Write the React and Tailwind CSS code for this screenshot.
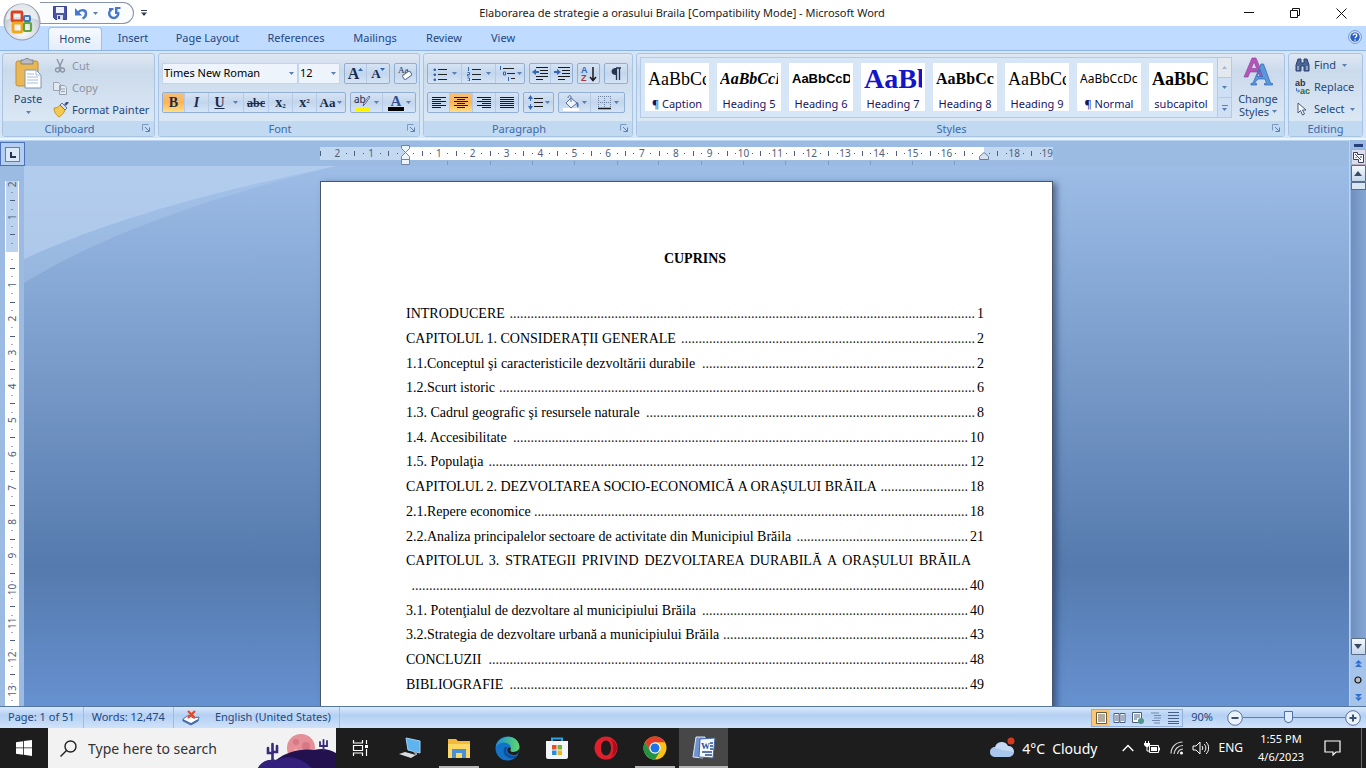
import React from "react";

const Caret = ({ className = "" }) => (
  <svg viewBox="0 0 5 3" className={`h-[3px] w-[5px] shrink-0 ${className}`} aria-hidden="true">
    <path d="M0 0h5L2.500 3z" fill="#5b7fb0" />
  </svg>
);

const Svg = ({ w = 16, h = 16, children, className = "" }) => (
  <svg width={w} height={h} viewBox={`0 0 ${w} ${h}`} className={`shrink-0 ${className}`} fill="none" aria-hidden="true">
    {children}
  </svg>
);

/* ---------- Title bar ---------- */

const OfficeOrb = () => (
  <button aria-label="Office Button" className="absolute left-[3px] top-[3px] z-10 h-[38px] w-[38px]">
    <svg viewBox="0 0 38 38" className="h-[38px] w-[38px]">
      <defs>
        <radialGradient id="orb" cx="0.5" cy="0.75" r="0.75">
          <stop offset="0" stopColor="#ffffff" />
          <stop offset="0.55" stopColor="#d5dae2" />
          <stop offset="1" stopColor="#aab3c1" />
        </radialGradient>
      </defs>
      <circle cx="19" cy="19" r="18" fill="url(#orb)" stroke="#8b98ad" />
      <path d="M3 17a16 16 0 0 1 32 0c-9-4-23-4-32 0z" fill="#fff" opacity=".65" />
      <rect x="9" y="9" width="10" height="9" rx="1" stroke="#d9421c" strokeWidth="2.800" fill="none" />
      <rect x="21" y="13" width="6" height="5" rx="1" stroke="#3b78c4" strokeWidth="2" fill="none" />
      <rect x="10" y="20" width="9" height="9" rx="1" stroke="#f0a81c" strokeWidth="2.800" fill="none" />
      <rect x="21" y="20" width="7" height="8" rx="1" stroke="#5fa640" strokeWidth="2.200" fill="none" />
    </svg>
  </button>
);

const TitleBar = () => (
  <header className="flex h-[26px] items-center bg-white">
    <div className="flex flex-1 items-center">
      <OfficeOrb />
      <div className="ml-[40px] flex h-[22px] w-[94px] items-center rounded-r-full border border-l-0 border-[#8793a8] bg-[#fbfcfe] pl-[13px]">
        <button aria-label="Save">
          <Svg w={14} h={14}>
            <path d="M.5.5h13v13h-11l-2-2z" fill="#4a55a8" stroke="#37418c" />
            <path d="M3 1h8v6H3z" fill="#eef2fb" />
            <path d="M4 9h6v5H4z" fill="#d9dff0" />
            <path d="M5 10h2v3H5z" fill="#37418c" />
          </Svg>
        </button>
        <button aria-label="Undo" className="ml-[8px]">
          <Svg w={13} h={13}>
            <path d="M3 5.500C6 2 11 2.500 11 6.500c0 2-1 4-3.500 5" stroke="#4478ca" strokeWidth="2.400" />
            <path d="M0 1v7.500h7z" fill="#4478ca" />
          </Svg>
        </button>
        <Caret className="ml-[5px]" />
        <button aria-label="Repeat" className="ml-[10px]">
          <Svg w={13} h={13}>
            <path d="M3.500 2.500A4.500 4.500 0 1 0 10 5" stroke="#4478ca" strokeWidth="2.400" />
            <path d="M1 1h4.500v2H1zM7 0h5.500v2H9.500v5H7z" fill="#4478ca" />
          </Svg>
        </button>
      </div>
      <button aria-label="Customize Quick Access Toolbar" className="ml-[7px]">
        <Svg w={6} h={6}>
          <path d="M0 0h6v1H0zM0 2.500h6L3 6z" fill="#333f55" />
        </Svg>
      </button>
    </div>
    <h1 className="whitespace-nowrap text-[11px] leading-[16px] text-[#1c1c1c]">
      Elaborarea de strategie a orasului Braila [Compatibility Mode] - Microsoft Word
    </h1>
    <div className="flex flex-1 items-center justify-end pr-[2px]">
      <button aria-label="Minimize" className="flex h-[26px] w-[46px] items-center justify-center">
        <Svg w={10} h={10}><path d="M0 4.500h10" stroke="#111" /></Svg>
      </button>
      <button aria-label="Restore" className="flex h-[26px] w-[46px] items-center justify-center">
        <Svg w={10} h={10}><path d="M.5 2.500h7v7h-7zM2.500 2.500v-2h7v7h-2" stroke="#111" /></Svg>
      </button>
      <button aria-label="Close" className="flex h-[26px] w-[46px] items-center justify-center">
        <Svg w={11} h={11}><path d="M.5.5l10 10M10.500.5l-10 10" stroke="#111" /></Svg>
      </button>
    </div>
  </header>
);

/* ---------- Tabs ---------- */

const tabs = [
  ["Insert", "w-[52px]"],
  ["Page Layout", "w-[87px]"],
  ["References", "w-[80px]"],
  ["Mailings", "w-[68px]"],
  ["Review", "w-[60px]"],
  ["View", "w-[48px]"],
];

const TabRow = () => (
  <nav className="flex h-[24px] items-end gap-[5px] bg-[#bfdbff] pl-[48px] pr-[4px] text-[11px] text-[#25477f]">
    <button className="h-[23px] w-[54px] rounded-t-[4px] border border-b-0 border-[#9ebfe8] bg-linear-to-b from-[#f6faff] to-[#e3edf9]">Home</button>
    {tabs.map(([t, w]) => (
      <button key={t} className={`h-[23px] whitespace-nowrap ${w}`}>{t}</button>
    ))}
    <button aria-label="Help" className="mb-[6px] ml-auto">
      <Svg w={14} h={14}>
        <circle cx="7" cy="7" r="6.300" fill="#fff" stroke="#5a86cc" />
        <circle cx="7" cy="7" r="4.800" fill="#2a62c4" />
        <path d="M5.200 5.600c0-2.400 3.800-2.200 3.600 0-.1 1.200-1.700 1.200-1.700 2.600M7.100 9.400v1.300" stroke="#fff" strokeWidth="1.300" />
      </Svg>
    </button>
  </nav>
);

/* ---------- Ribbon ---------- */

const Launcher = () => (
  <Svg w={8} h={8}>
    <path d="M.5 6.500v-6h6" stroke="#7b98c2" />
    <path d="M3 3l4 4M7.500 3.500v4h-4" stroke="#5f7fae" />
  </Svg>
);

const Group = ({ title, launcher = true, className = "", children }) => (
  <section className={`flex h-[84px] shrink-0 flex-col rounded-[3px] border border-[#a9c4e2] bg-linear-to-b from-[#dfe8f3] via-[#cbdaeb] via-20% to-[#dfecf8] ${className}`}>
    <div className="min-h-0 flex-1">{children}</div>
    <div className={`relative flex h-[15px] items-center justify-center rounded-b-[2px] bg-[#c1d9f1] text-[11px] leading-[15px] text-[#3e6aaa] ${launcher ? "pr-[18px]" : ""}`}>
      <h2>{title}</h2>
      {launcher && (
        <button aria-label={`${title} options`} className="absolute right-[4px] top-[3px]"><Launcher /></button>
      )}
    </div>
  </section>
);

const Cluster = ({ children }) => (
  <div className="flex h-[21px] shrink-0 divide-x divide-[#b4cae6] rounded-[2px] border border-[#91afd5] bg-linear-to-b from-[#d6e4f4] via-[#c3d6ed] to-[#d5e5f7]">
    {children}
  </div>
);

const Tool = ({ label, w, active, caret, children }) => (
  <button
    aria-label={label}
    className={`flex h-[19px] items-center justify-center gap-[2px] leading-[18px] ${w} ${active ? "bg-linear-to-b from-[#f3c07e] via-[#fbb452] to-[#ffdf83]" : ""}`}
  >
    {children}
    {caret && <Caret />}
  </button>
);

const serif = "font-['Liberation_Serif'] leading-[18px]";

const ClipboardGroup = () => (
  <Group title="Clipboard" className="w-[153px]">
    <div className="flex h-full">
      <button className="flex w-[50px] flex-col items-center pt-[4px] text-[11px] leading-[14px] text-[#25477f]">
        <Svg w={28} h={32}>
          <rect x="2" y="3" width="22" height="25" rx="2" fill="#eab853" stroke="#c58f34" />
          <path d="M7 2h3c1-2 5-2 6 0h3v4H7z" fill="#b9bcc2" stroke="#7f838c" />
          <path d="M11 12h11l5 5v13H11z" fill="#fff" stroke="#7d93b8" />
          <path d="M22 12v5h5M13 16h7M13 19h11M13 22h11M13 25h11" stroke="#a9bbd8" />
        </Svg>
        <span className="mt-[2px]">Paste</span>
        <Caret className="mt-[5px]" />
      </button>
      <div className="flex flex-col pt-[1px] text-[11px] text-[#25477f]">
        <button className="flex h-[22px] items-center gap-[5px] text-[#8d95a3]">
          <Svg w={14} h={14}>
            <path d="M4 0l4 9M10 0L6 9" stroke="#8d95a3" strokeWidth="1.400" />
            <circle cx="4.500" cy="11" r="2" stroke="#8d95a3" strokeWidth="1.300" />
            <circle cx="9.500" cy="11" r="2" stroke="#8d95a3" strokeWidth="1.300" />
          </Svg>
          Cut
        </button>
        <button className="flex h-[22px] items-center gap-[5px] text-[#8d95a3]">
          <Svg w={14} h={14}>
            <path d="M.5 1.500h5l2 2v6h-7zM6.500 4.500h5l2 2v7h-7z" fill="#e3e9f1" stroke="#98a3b5" />
            <path d="M8 8h4M8 10.500h4" stroke="#98a3b5" />
          </Svg>
          Copy
        </button>
        <button className="flex h-[22px] items-center gap-[3px]">
          <Svg w={16} h={16}>
            <path d="M1 6c3 0 5-1 6-3l5 5c-1 3-3 5-6 7C3 13 1 10 1 6z" fill="#f3c94f" stroke="#c99526" />
            <path d="M7 3l2-2 5 5-2 2z" fill="#d7e0ef" stroke="#5c76a6" />
            <path d="M12 3l3-3" stroke="#38508a" strokeWidth="2.400" />
          </Svg>
          Format Painter
        </button>
      </div>
    </div>
  </Group>
);

const Combo = ({ id, label, value, w }) => (
  <div className={`relative flex items-center ${w}`}>
    <label htmlFor={id} className="sr-only">{label}</label>
    <select id={id} className="h-[21px] w-full appearance-none border border-[#c3d5ec] bg-[#edf4fc] pl-[1px] text-[11px] text-black">
      <option>{value}</option>
    </select>
    <Caret className="pointer-events-none absolute right-[4px]" />
  </div>
);

const FontGroup = () => (
  <Group title="Font" className="w-[262px]">
    <div className="flex h-full flex-col gap-[8px] px-[3px] pt-[9px] text-[#1b2b4a]">
      <div className="flex gap-[4px]">
        <div className="flex">
          <Combo id="font-name" label="Font" value="Times New Roman" w="w-[136px]" />
          <Combo id="font-size" label="Font size" value="12" w="w-[42px]" />
        </div>
        <Cluster>
          <Tool label="Grow font" w="w-[22px]">
            <span className={`${serif} text-[16px] font-bold`}>A</span>
            <Svg w={5} h={12} className="-ml-[3px]"><path d="M0 3h5L2.500 0z" fill="#3566b4" /></Svg>
          </Tool>
          <Tool label="Shrink font" w="w-[22px]">
            <span className={`${serif} text-[13px] font-bold`}>A</span>
            <Svg w={5} h={12} className="-ml-[3px]"><path d="M0 0h5L2.500 3z" fill="#3566b4" /></Svg>
          </Tool>
        </Cluster>
        <Cluster>
          <Tool label="Clear formatting" w="w-[21px]">
            <Svg w={17} h={17}>
              <text x="1" y="8" fontSize="9" fontFamily="Liberation Serif" fill="#1b2b4a">Aa</text>
              <rect x="6" y="8" width="9" height="5" rx="1.500" transform="rotate(-35 10 11)" fill="#fff" stroke="#5c6f94" />
            </Svg>
          </Tool>
        </Cluster>
      </div>
      <div className="flex gap-[4px]">
        <Cluster>
          <Tool label="Bold" w="w-[22px]" active><b className={`${serif} text-[14px]`}>B</b></Tool>
          <Tool label="Italic" w="w-[24px]"><i className={`${serif} text-[14px] font-bold`}>I</i></Tool>
          <Tool label="Underline" w="w-[35px]" caret><u className={`${serif} mr-[6px] text-[14px] font-bold`}>U</u></Tool>
          <Tool label="Strikethrough" w="w-[25px]"><s className={`${serif} text-[12px] font-bold`}>abc</s></Tool>
          <Tool label="Subscript" w="w-[24px]"><b className={`${serif} text-[14px]`}>x<sub className="text-[7px]">2</sub></b></Tool>
          <Tool label="Superscript" w="w-[24px]"><b className={`${serif} text-[14px]`}>x<sup className="text-[7px]">2</sup></b></Tool>
          <Tool label="Change case" w="w-[28px]" caret><b className={`${serif} text-[13px]`}>Aa</b></Tool>
        </Cluster>
        <Cluster>
          <Tool label="Highlight color" w="w-[32px]" caret>
            <Svg w={18} h={17}>
              <rect x="1" y="13" width="15" height="4" fill="#fff200" />
              <text x="0" y="9" fontSize="10" fontFamily="Noto Sans" fill="#1b2b4a">ab</text>
              <path d="M16 3l-5 7-2 2 1-3 5-7z" fill="#f4f7fb" stroke="#4b5f86" strokeWidth=".9" />
            </Svg>
          </Tool>
          <Tool label="Font color" w="w-[32px]" caret>
            <Svg w={16} h={17}>
              <rect x="0" y="13" width="16" height="4" fill="#000" />
              <text x="8" y="12" textAnchor="middle" fontSize="15" fontWeight="bold" fontFamily="Liberation Serif" fill="#2f4f8f">A</text>
            </Svg>
          </Tool>
        </Cluster>
      </div>
    </div>
  </Group>
);

const ListLines = ({ nums }) => (
  <Svg w={15} h={14}>
    <path d="M5 2.500h9M5 7.500h9M5 12.500h9" stroke="#222" />
    {nums ? (
      <path d="M1.500 0v4M.5 5.500h2v2h-2v1.500h2M.5 11h2v3h-2" stroke="#3566b4" />
    ) : (
      <path d="M1 2h1.500v1.500H1zM1 7h1.500v1.500H1zM1 12h1.500v1.500H1z" stroke="#3566b4" fill="#3566b4" />
    )}
  </Svg>
);

const Align = ({ d }) => <Svg w={14} h={12}><path d={d} stroke="#1a1a1a" /></Svg>;

const Indent = ({ arrow }) => (
  <Svg w={16} h={13}>
    <path d="M4 .5h12M8 3.500h8M8 6.500h8M4 9.500h12M4 12.500h7" stroke="#1a1a1a" />
    <path d={arrow} fill="#3566b4" />
  </Svg>
);

const ParagraphGroup = () => (
  <Group title="Paragraph" className="w-[210px]">
    <div className="flex h-full flex-col gap-[8px] px-[3px] pt-[9px]">
      <div className="flex gap-[4px]">
        <Cluster>
          <Tool label="Bullets" w="w-[34px]" caret><span className="mr-[2px]"><ListLines /></span></Tool>
          <Tool label="Numbering" w="w-[34px]" caret><span className="mr-[2px]"><ListLines nums /></span></Tool>
          <Tool label="Multilevel list" w="w-[28px]" caret>
            <Svg w={16} h={15}>
              <path d="M4 2.500h11M8 7.500h8M12 12.500h4" stroke="#222" />
              <path d="M1.500 0v4M4.500 6h2v3h-2zM9.500 11v4" stroke="#3566b4" />
            </Svg>
          </Tool>
        </Cluster>
        <Cluster>
          <Tool label="Decrease indent" w="w-[21px]"><Indent arrow="M0 5l4-3v2h3v2H4v2z" /></Tool>
          <Tool label="Increase indent" w="w-[21px]"><Indent arrow="M7 5L3 2v2H0v2h3v2z" /></Tool>
        </Cluster>
        <Cluster>
          <Tool label="Sort" w="w-[21px]">
            <Svg w={16} h={16}>
              <text x="0" y="7" fontSize="9" fontWeight="bold" fontFamily="Liberation Sans" fill="#3566b4">A</text>
              <text x="0" y="15" fontSize="9" fontWeight="bold" fontFamily="Liberation Sans" fill="#b3343f">Z</text>
              <path d="M12 1v13M9 11l3 3.500 3-3.500" stroke="#1a1a1a" strokeWidth="1.500" />
            </Svg>
          </Tool>
        </Cluster>
        <Cluster>
          <Tool label="Show paragraph marks" w="w-[22px]">
            <Svg w={12} h={14}>
              <path d="M6 1h5M6.500 1v12M9.500 1v12" stroke="#25334f" strokeWidth="1.300" />
              <path d="M6 1C0 1 0 8 6 8z" fill="#25334f" />
            </Svg>
          </Tool>
        </Cluster>
      </div>
      <div className="flex gap-[4px]">
        <Cluster>
          <Tool label="Align left" w="w-[22px]"><Align d="M0 .5h14M0 2.500h9M0 4.500h14M0 6.500h9M0 8.500h14M0 10.500h9" /></Tool>
          <Tool label="Center" w="w-[23px]" active><Align d="M0 .5h14M3 2.500h8M0 4.500h14M3 6.500h8M0 8.500h14M3 10.500h8" /></Tool>
          <Tool label="Align right" w="w-[23px]"><Align d="M0 .5h14M5 2.500h9M0 4.500h14M5 6.500h9M0 8.500h14M5 10.500h9" /></Tool>
          <Tool label="Justify" w="w-[22px]"><Align d="M0 .5h14M0 2.500h14M0 4.500h14M0 6.500h14M0 8.500h14M0 10.500h14" /></Tool>
        </Cluster>
        <Cluster>
          <Tool label="Line spacing" w="w-[29px]" caret>
            <Svg w={15} h={15}>
              <path d="M6 3.500h9M6 7.500h9M6 11.500h9" stroke="#1a1a1a" />
              <path d="M2.500 0L0 4h2v2h1V4h2zM2.500 15L0 11h2V9h1v2h2z" fill="#3566b4" />
            </Svg>
          </Tool>
        </Cluster>
        <Cluster>
          <Tool label="Shading" w="w-[32px]" caret>
            <Svg w={17} h={16}>
              <path d="M0 14.500h16" stroke="#fff" strokeWidth="3" />
              <path d="M8 3l6 5-6 5-5-5z" fill="#eef3fa" stroke="#5a6f98" />
              <path d="M8 7V2c0-2-3-2-3 1" stroke="#5a6f98" />
              <path d="M14 7c2 1 2 4 1 6-1-1-2-3-1-6z" fill="#3f6cb4" />
            </Svg>
          </Tool>
          <Tool label="Borders" w="w-[33px]" caret>
            <Svg w={15} h={15}>
              <path d="M1.500 1v12M7.500 1v12M13.500 1v12M1 1.500h13M1 7.500h13" stroke="#6d7f9e" strokeDasharray="1 1" />
              <path d="M1 13.500h13" stroke="#1a1a1a" strokeWidth="1.500" />
            </Svg>
          </Tool>
        </Cluster>
      </div>
    </div>
  </Group>
);

const styles = [
  ["AaBbCc", "¶ Caption", "font-['Liberation_Serif'] text-[18px]"],
  ["AaBbCcI", "Heading 5", "font-['Liberation_Serif'] text-[16px] font-bold italic"],
  ["AaBbCcD", "Heading 6", "font-['Liberation_Sans'] text-[13px] font-bold"],
  ["AaBb", "Heading 7", "font-['Liberation_Serif'] text-[28px] font-bold text-[#1414c8]"],
  ["AaBbCc", "Heading 8", "font-['Liberation_Serif'] text-[16px] font-bold"],
  ["AaBbCc", "Heading 9", "font-['Liberation_Serif'] text-[18px]"],
  ["AaBbCcDc", "¶ Normal", "text-[12px]"],
  ["AaBbC", "subcapitol", "font-['Liberation_Serif'] text-[18px] font-bold"],
];

const StylesGroup = () => (
  <Group title="Styles" className="min-w-[648px] flex-1">
    <div className="flex h-full justify-between pl-[3px] pt-[3px]">
      <div className="flex h-[61px] border border-[#b3cbe8] bg-[#d7e6f7]">
        <div className="flex gap-[8px] px-[4px] pt-[5px]">
          {styles.map(([sample, name, cls]) => (
            <button key={name} className="flex h-[48px] w-[64px] flex-col items-center bg-white">
              <span className="flex h-[32px] w-[58px] items-center overflow-hidden text-black">
                <span className={`whitespace-nowrap leading-[32px] ${cls}`}>{sample}</span>
              </span>
              <span className="whitespace-nowrap pt-[2px] text-[11px] leading-[14px] text-[#15156a]">{name}</span>
            </button>
          ))}
        </div>
        <div className="flex w-[14px] flex-col divide-y divide-[#b3cbe8] border-l border-[#b3cbe8] bg-[#cfe0f5]">
          <button aria-label="Scroll up" className="flex flex-1 items-center justify-center bg-[#e4e9f0]">
            <Svg w={5} h={3}><path d="M0 3h5L2.500 0z" fill="#a9b6c8" /></Svg>
          </button>
          <button aria-label="Scroll down" className="flex flex-1 items-center justify-center"><Caret /></button>
          <button aria-label="More styles" className="flex flex-1 flex-col items-center justify-center gap-[2px]">
            <span className="h-px w-[6px] bg-[#5b7fb0]" />
            <Caret />
          </button>
        </div>
      </div>
      <button className="flex flex-1 flex-col items-center text-[11px] leading-[13px] text-[#25477f]">
        <Svg w={30} h={30}>
          <path d="M1 20L9 1h4l8 19h-4l-2-5H7l-2 5zM8.300 11.500h5.400L11 5z" fill="#b455b8" stroke="#8d3a94" strokeWidth=".6" fillRule="evenodd" />
          <path d="M8 28v-1.500l2-.5L18 7h2.500l7 19 2 .5V28h-8v-1.500l2-.5-1.500-4h-7L11.500 26l2 .5V28zM14 19.500h5.500L17 12.500z" fill="#5b97dc" stroke="#2d65b3" strokeWidth=".7" fillRule="evenodd" />
        </Svg>
        <span className="mt-[5px]">Change</span>
        <span className="flex items-center gap-[3px]">Styles <Caret /></span>
      </button>
    </div>
  </Group>
);

const EditingGroup = () => (
  <Group title="Editing" launcher={false} className="w-[75px]">
    <div className="flex h-full flex-col pl-[6px] text-[11px] text-[#25477f]">
      <button className="flex h-[22px] items-center gap-[4px]">
        <Svg w={15} h={14}>
          <path d="M3 1h3v4h3V1h3l2 6v6H9V8H6v5H1V7z" fill="#4b6596" stroke="#2b4373" />
          <path d="M3 8v4M12 8v4" stroke="#cfdcf0" />
        </Svg>
        Find <Caret className="ml-[2px]" />
      </button>
      <button className="flex h-[22px] items-center gap-[3px]">
        <Svg w={16} h={16}>
          <text x="0" y="7" fontSize="9" fontWeight="bold" fontFamily="Liberation Sans" fill="#333">ab</text>
          <text x="5" y="15" fontSize="9" fontWeight="bold" fontFamily="Liberation Sans" fill="#2d6b3c">ac</text>
          <path d="M1.500 9v3h3M3 10.500l1.500 1.500L3 13.500" stroke="#3566b4" strokeWidth=".8" />
        </Svg>
        Replace
      </button>
      <button className="flex h-[22px] items-center gap-[4px]">
        <Svg w={15} h={14}>
          <path d="M3 1v10l2.500-2.500L7.500 13l2-1-2-4H11z" fill="#fff" stroke="#47597c" />
        </Svg>
        Select <Caret className="ml-[1px]" />
      </button>
    </div>
  </Group>
);

const Ribbon = () => (
  <div className="flex gap-[3px] border-t border-b-2 border-t-[#8fb4e3] border-b-[#eaf6ff] bg-[#d5e6f8] pb-[1px] pl-[2px] pr-[3px] pt-[2px]">
    <ClipboardGroup />
    <FontGroup />
    <ParagraphGroup />
    <StylesGroup />
    <EditingGroup />
  </div>
);

/* ---------- Rulers ---------- */

const UNIT = 33.85;
const hUnits = Array.from({ length: 22 }, (_, i) => i - 2);
const tabStops = [127, 170, 212, 254, 297, 338, 381, 423, 465, 508, 550, 592, 634];

const HorizontalRuler = () => (
  <svg width="733" height="24" viewBox="0 0 733 24" className="shrink-0" role="img" aria-label="Horizontal ruler">
    <rect x="0" y="5" width="733" height="13" fill="#c3d8f1" />
    <rect x="85" y="5" width="579" height="13" fill="#fff" />
    {hUnits.map((n) => {
      const x = 85 + n * UNIT;
      return (
        <g key={n}>
          {n !== 0 && n !== 17 && (
            <text x={n === 19 ? x - 1 : x} y="15" textAnchor="middle" fontSize="10" fill="#50607a" fontFamily="Noto Sans">{Math.abs(n)}</text>
          )}
          {x > 20 && <path d={`M${Math.round(x - UNIT / 4)} 11.500h1M${Math.round(x - UNIT / 2)}.5 9v5`} stroke="#50607a" />}
          {n !== 19 && <path d={`M${Math.round(x + UNIT / 4)} 11.500h1`} stroke="#50607a" />}
        </g>
      );
    })}
    <path d="M.5 9v5" stroke="#50607a" />
    {tabStops.map((x) => <path key={x} d={`M${x}.5 19v4`} stroke="#7f9cc4" />)}
    <path d="M81.500 3.500h8v3l-4 4-4-4zM81.500 17.500v-3l4-4 4 4v3zM81.500 17.500h8v5h-8z" fill="#eef4fb" stroke="#7384a1" />
    <path d="M659.500 17.500v-3l4.500-4 4.500 4v3z" fill="#d6e2f2" stroke="#6c7d9b" />
  </svg>
);

const vUnits = Array.from({ length: 16 }, (_, i) => i - 2);

const VerticalRuler = () => (
  <svg width="14" height="540" viewBox="0 0 14 540" className="shrink-0" role="img" aria-label="Vertical ruler">
    <rect x="0" y="0" width="14" height="540" fill="#fff" />
    <rect x="1" y="0" width="12" height="71" fill="#bcd3ef" />
    {vUnits.map((n) => {
      const y = 70 + n * UNIT;
      return (
        <g key={n} stroke="#50607a">
          {n !== 0 && (
            <text stroke="none" textAnchor="middle" fontSize="10" fill="#50607a" fontFamily="Noto Sans" transform={`translate(11 ${n === -2 ? y + 1 : y}) rotate(-90)`}>{Math.abs(n)}</text>
          )}
          <path d={`M6.500 ${Math.round(y + UNIT / 4)}.5h1M5 ${Math.round(y + UNIT / 2)}.5h5M6.500 ${Math.round(y + (UNIT * 3) / 4)}.5h1`} />
        </g>
      );
    })}
  </svg>
);

/* ---------- Document ---------- */

/* title, page number, number of leader dots */
const toc = [
  ["INTRODUCERE", 1, 133],
  ["CAPITOLUL 1. CONSIDERAȚII GENERALE", 2, 84],
  ["1.1.Conceptul şi caracteristicile dezvoltării durabile", 2, 78],
  ["1.2.Scurt istoric", 6, 136],
  ["1.3. Cadrul geografic şi resursele naturale", 8, 94],
  ["1.4. Accesibilitate", 10, 130],
  ["1.5. Populaţia", 12, 137],
  ["CAPITOLUL 2. DEZVOLTAREA SOCIO-ECONOMICĂ A ORAȘULUI BRĂILA", 18, 25],
  ["2.1.Repere economice", 18, 124],
  ["2.2.Analiza principalelor sectoare de activitate din Municipiul Brăila", 21, 49],
  ["CAPITOLUL 3. STRATEGII PRIVIND DEZVOLTAREA DURABILĂ A ORAȘULUI BRĂILA", null, 0],
  ["", 40, 159],
  ["3.1. Potenţialul de dezvoltare al municipiului Brăila", 40, 76],
  ["3.2.Strategia de dezvoltare urbană a municipiului Brăila", 43, 70],
  ["CONCLUZII", 48, 137],
  ["BIBLIOGRAFIE", 49, 131],
];

const Page = () => (
  <article className="relative mt-[15px] h-full w-[733px] shrink-0 border border-b-0 border-[#4a5568] bg-white pl-[85px] pr-[68px] pt-[65px] font-['Liberation_Serif',serif] text-[14px] text-black shadow-[4px_2px_6px_rgba(30,50,90,0.55)]">
    <h2 className="text-center font-bold leading-[24px]">CUPRINS</h2>
    <ol className="mt-[31px] grid h-[395px] auto-rows-fr grid-cols-1">
      {toc.map(([title, page, dots], i) => (
        <li key={i} className="flex min-w-0 items-center leading-[24px]">
          {page === null ? (
            <a href="#toc" className="mr-[13px] flex-1 [text-align-last:justify]">{title}</a>
          ) : (
            <a href="#toc" className="flex min-w-0 flex-1 whitespace-nowrap">
              <span>{title}</span>
              <span className="ml-auto mr-[2px] text-[#222]" aria-hidden="true">{".".repeat(dots)}</span>
              <span>{page}</span>
            </a>
          )}
        </li>
      ))}
    </ol>
  </article>
);

const ScrollButton = ({ label, d }) => (
  <button aria-label={label} className="flex h-[17px] w-[15px] shrink-0 items-center justify-center rounded-[1px] border border-[#5a6d8e] bg-linear-to-b from-[#f3f7fc] to-[#c6d6ea]">
    <Svg w={8} h={5}><path d={d} fill="#3a4a66" /></Svg>
  </button>
);

const Workspace = () => (
  <div className="flex min-h-0 flex-1 bg-[#9cbbe3]">
    <div className="flex min-w-0 flex-1 flex-col">
      <div className="flex h-[26px] items-center border-t border-[#b9d3f1] pt-[1px]">
        <button aria-label="Tab selector" className="flex h-[24px] w-[25px] items-center justify-center border border-[#4b72b8] bg-[#b5cff0]">
          <Svg w={15} h={15}>
            <rect x=".5" y=".5" width="14" height="14" fill="#dbe8f8" stroke="#5d7fbc" />
            <path d="M6 5v5h5" stroke="#25334f" strokeWidth="2" />
          </Svg>
        </button>
        <div className="flex flex-1 justify-center pr-px">
          <HorizontalRuler />
        </div>
      </div>
      <div className="flex min-h-0 flex-1">
        <div className="flex w-[24px] shrink-0 justify-center overflow-hidden pr-[1px] pt-[15px]">
          <VerticalRuler />
        </div>
        <main className="relative flex min-w-0 flex-1 justify-center overflow-hidden bg-linear-to-b from-[#9dbde7] via-[#557aad] via-74% to-[#6691d0]">
          <svg className="absolute left-0 top-0" width="312" height="120" viewBox="0 0 312 120" aria-hidden="true">
            <path d="M0 0h312C200 28 90 62 0 117z" fill="#b0cbed" opacity=".4" />
            <path d="M0 0h312C200 24 100 48 0 93z" fill="#bfd6f3" opacity=".55" />
          </svg>
          <Page />
        </main>
      </div>
    </div>
    <div className="flex w-[17px] shrink-0 flex-col items-center border-l border-[#b9d3f1]">
      <button aria-label="Split" className="mt-[4px] h-[3px] w-[9px] shrink-0 bg-[#25407a]" />
      <button aria-label="View ruler" className="mt-[2px] flex h-[16px] w-[15px] shrink-0 items-center justify-center border border-[#b3a9bb] bg-[#dcdfe9]">
        <Svg w={13} h={13}>
          <path d="M1.500 1.500h4v2h6v8h-5v-3h-5z" fill="#f8f9fc" stroke="#3b4058" />
          <path d="M3 3l6 6M9 5v2M4 6v1" stroke="#3b4058" />
        </Svg>
      </button>
      <ScrollButton label="Scroll up" d="M0 5h8L4 0z" />
      <div className="flex w-[15px] flex-1 flex-col items-center bg-linear-to-r from-[#6f90c0] to-[#86a6d2]">
        <div className="h-[8px] w-[15px] border border-[#5a6d8e] bg-[#dce7f4]" />
      </div>
      <ScrollButton label="Scroll down" d="M0 0h8L4 5z" />
      <div className="flex h-[51px] w-full flex-col items-center justify-around bg-[#a6c3ea]">
        <button aria-label="Previous page"><Svg w={7} h={7}><path d="M0 3.500L3.500 0 7 3.500zM0 7l3.500-3.500L7 7z" fill="#2f6fd0" /></Svg></button>
        <button aria-label="Select browse object"><Svg w={8} h={8}><circle cx="4" cy="4" r="3" fill="#b9bcc4" stroke="#111" strokeWidth="1.200" /></Svg></button>
        <button aria-label="Next page"><Svg w={7} h={7}><path d="M0 0h7L3.500 3.500zM0 3.500h7L3.500 7z" fill="#2f6fd0" /></Svg></button>
      </div>
    </div>
  </div>
);

/* ---------- Status bar ---------- */

const ViewButton = ({ label, active, children }) => (
  <button aria-label={label} className={`flex h-[16px] w-[18px] items-center justify-center ${active ? "bg-[#fcc775]" : ""}`}>
    <Svg w={13} h={12}>{children}</Svg>
  </button>
);

const StatusBar = () => (
  <footer className="flex h-[22px] shrink-0 items-center border-t border-[#56779f] bg-linear-to-b from-[#d9e9fc] via-[#b4d0f3] via-40% to-[#cfe2fa] text-[11px] text-[#25477f]">
    <button className="h-full border-r border-[#9dbce4] pl-[8px] pr-[8px]">Page: 1 of 51</button>
    <button className="h-full border-r border-[#9dbce4] pl-[8px] pr-[8px]">Words: 12,474</button>
    <button aria-label="Proofing errors" className="ml-[8px]">
      <Svg w={18} h={16}>
        <path d="M1 9l6-4 4 3 6-1-1 4-7 4-8-4z" fill="#fff" stroke="#4b6ea8" />
        <path d="M1 10l8 4 7-4" stroke="#3f66ad" strokeWidth="1.500" />
        <path d="M6 1l7 7M13 1L6 8" stroke="#e0492c" strokeWidth="2.200" />
      </Svg>
    </button>
    <button className="ml-[15px] h-full border-r border-[#9dbce4] pr-[8px]">English (United States)</button>
    <div className="ml-auto flex items-center">
      <div className="flex items-center border border-[#8fb0dd]">
        <ViewButton label="Print layout" active><path d="M1.500.5h10v11h-10z" fill="#fff" stroke="#6b5a3a" /><path d="M3 3h7M3 5h7M3 7h7M3 9h7" stroke="#6b5a3a" /></ViewButton>
        <ViewButton label="Full screen reading"><path d="M1 1.500h5v9H1zM7 1.500h5v9H7z" fill="#fff" stroke="#4a5f88" /><path d="M2 4h3M2 6h3M2 8h3M8 4h3M8 6h3M8 8h3" stroke="#4a5f88" /></ViewButton>
        <ViewButton label="Web layout"><path d="M1.500.5h9v10h-9z" fill="#fff" stroke="#4a5f88" /><path d="M3 3h6M3 5h6M3 7h3" stroke="#4a5f88" /><circle cx="10" cy="9" r="3" fill="#4f9a8c" /></ViewButton>
        <ViewButton label="Outline"><path d="M2 1h8M5 3.500h7M5 6h7M3 8.500h8M5 11h6" stroke="#7188ae" /></ViewButton>
        <ViewButton label="Draft"><path d="M1 .5h11M1 3.500h11M1 6.500h11M1 9.500h11M1 11.500h11" stroke="#4a5f88" /></ViewButton>
      </div>
      <button className="w-[44px] pr-[6px] text-center">90%</button>
      <button aria-label="Zoom out" className="flex">
        <Svg w={16} h={16}><circle cx="8" cy="8" r="7.300" fill="#eaf2fc" stroke="#5c7096" /><path d="M4.500 8h7" stroke="#3c4f75" strokeWidth="2" /></Svg>
      </button>
      <input
        type="range"
        min="0"
        max="100"
        defaultValue="44"
        aria-label="Zoom"
        className="h-[14px] w-[102px] appearance-none bg-transparent [&::-webkit-slider-runnable-track]:h-px [&::-webkit-slider-runnable-track]:bg-[#5c7eb4] [&::-webkit-slider-thumb]:mt-[-6px] [&::-webkit-slider-thumb]:h-[12px] [&::-webkit-slider-thumb]:w-[9px] [&::-webkit-slider-thumb]:appearance-none [&::-webkit-slider-thumb]:rounded-b-[4px] [&::-webkit-slider-thumb]:border [&::-webkit-slider-thumb]:border-[#4f6fa5] [&::-webkit-slider-thumb]:bg-[#dfecfb]"
      />
      <button aria-label="Zoom in" className="mr-[5px] flex">
        <Svg w={16} h={16}><circle cx="8" cy="8" r="7.300" fill="#eaf2fc" stroke="#5c7096" /><path d="M4.500 8h7M8 4.500v7" stroke="#3c4f75" strokeWidth="2" /></Svg>
      </button>
    </div>
  </footer>
);

/* ---------- Taskbar ---------- */

const TaskApp = ({ label, open, active, children }) => (
  <button aria-label={label} className={`relative flex h-full w-[49px] items-center justify-center ${active ? "bg-[#474747]" : ""}`}>
    {children}
    {open && <span className={`absolute bottom-0 h-[2px] bg-[#b5b5b5] ${active ? "w-full" : "w-[40px]"}`} />}
  </button>
);

const Taskbar = () => (
  <div className="flex h-[40px] shrink-0 items-center bg-[#1d1d1d] text-white">
    <button aria-label="Start" className="flex h-full w-[48px] items-center justify-center">
      <Svg w={16} h={16}><path d="M0 2.200L7 1.200v6.300H0zM7.800 1.100L16 0v7.500H7.800zM0 8.300h7v6.400l-7-1zM7.800 8.300H16V16l-8.200-1.200z" fill="#fff" /></Svg>
    </button>
    <div className="flex h-full w-[288px] items-center bg-[#f2f2f2] pl-[12px]">
      <Svg w={17} h={17}><circle cx="10.500" cy="6.500" r="5.500" stroke="#222" strokeWidth="1.400" /><path d="M6.500 10.500L.5 16.500" stroke="#222" strokeWidth="1.400" /></Svg>
      <input aria-label="Search" placeholder="Type here to search" className="ml-[11px] min-w-0 flex-1 bg-transparent text-[14px] text-[#333] outline-none placeholder:text-[#333]" />
      <svg width="80" height="40" viewBox="0 0 80 40" className="shrink-0" aria-hidden="true">
        <circle cx="45" cy="20" r="14" fill="#e58f98" />
        <circle cx="40" cy="14" r="3" fill="#d67886" />
        <circle cx="50" cy="18" r="4" fill="#d67886" />
        <circle cx="40" cy="23" r="2.500" fill="#f2a9ac" />
        <path d="M2 40c4-7 11-9 18-8C30 24 46 20 58 22c8-2 15-1 22 3v15z" fill="#22104f" />
        <path d="M20 32c10-5 24-4 36 8H2c4-7 11-9 18-8z" fill="#33207a" />
        <path d="M16.500 32V16M12 20v5h4.500M21 18v6h-4.500" stroke="#3a2a7c" strokeWidth="2.600" fill="none" strokeLinecap="round" />
        <path d="M67.500 22V12M64 14v4h3.500M71 13v5h-3.500" stroke="#3a2a7c" strokeWidth="1.800" fill="none" strokeLinecap="round" />
      </svg>
    </div>
    <TaskApp label="Task View">
      <Svg w={17} h={16}><path d="M1.500 0v3h9V0M1.500 16v-3h9v3M1.500 5.500h9v5h-9zM14.500 0v4M14.500 9v7" stroke="#fff" strokeWidth="1.200" /><rect x="13" y="5" width="3" height="3" fill="#fff" /></Svg>
    </TaskApp>
    <TaskApp label="This PC">
      <Svg w={24} h={24}><path d="M8 2l14 3v12L10 14z" fill="#5db4ee" stroke="#9fd4f7" /><path d="M1 18l6-2 11 3-5 3z" fill="#d9dde2" /><path d="M16 16l2 1v2" stroke="#9ba3ad" strokeWidth="2" /></Svg>
    </TaskApp>
    <TaskApp label="File Explorer" open>
      <Svg w={24} h={22}><path d="M1 2h8l2 2h12v17H1z" fill="#f5b93a" /><path d="M1 7h22v14H1z" fill="#fbd765" /><path d="M5 12h14v9h-4v-5H9v5H5z" fill="#4a90d4" /></Svg>
    </TaskApp>
    <TaskApp label="Edge">
      <svg width="25" height="25" viewBox="0 0 24 24" aria-hidden="true">
        <defs><linearGradient id="edge" x1="0" x2="1"><stop offset="0" stopColor="#1b8fd8" /><stop offset="1" stopColor="#5fd86a" /></linearGradient></defs>
        <circle cx="12" cy="12" r="11.500" fill="#1473c6" />
        <path d="M.6 11C2-1 21-3.500 23.400 9.500c.6 4.500-4 6.500-8 5.500-1.500-.6-.8-1.500-.3-3C16 6 5 3 .6 11z" fill="url(#edge)" />
        <path d="M9 11c-3 6 3 12 10 10 1.500-.7 2.500-1.800 3.300-3-3 2-9 1-11-2-1-1.700-.8-3.500 1-5-1-1-2.600-1-3.300 0z" fill="#0c4f9e" />
        <path d="M12.500 11.500c1.500-1 3 0 2.600 1-.4 1.200-.7 2 .6 2.500 3 1 6 0 7.700-2.500.1 3-1.500 5-3.400 5.500-4 1-10-1.500-7.500-6.500z" fill="#1d1d1d" />
      </svg>
    </TaskApp>
    <TaskApp label="Microsoft Store">
      <Svg w={24} h={24}><path d="M7 6V2.500h10V6" stroke="#2ba3e4" strokeWidth="2" /><path d="M1 5h22v16a2 2 0 0 1-2 2H3a2 2 0 0 1-2-2z" fill="#f3f5f8" /><path d="M7 9h4.500v4.500H7z" fill="#e8502a" /><path d="M12.500 9H17v4.500h-4.500z" fill="#6fb536" /><path d="M7 14.500h4.500V19H7z" fill="#2a8fdc" /><path d="M12.500 14.500H17V19h-4.500z" fill="#f3b21b" /></Svg>
    </TaskApp>
    <TaskApp label="Opera">
      <svg width="24" height="24" viewBox="0 0 24 24" aria-hidden="true">
        <path fillRule="evenodd" d="M12 .5a11.500 11.500 0 1 1 0 23 11.500 11.500 0 0 1 0-23zm0 4c-3 0-5 3.400-5 7.500s2 7.500 5 7.500 5-3.400 5-7.500-2-7.500-5-7.500z" fill="#e0202c" />
        <path d="M17 3c8 5 8 13 0 18 3-5 3-13 0-18z" fill="#a80f1d" />
      </svg>
    </TaskApp>
    <TaskApp label="Chrome" open>
      <svg width="24" height="24" viewBox="0 0 24 24" aria-hidden="true">
        <circle cx="12" cy="12" r="11.500" fill="#fbc116" />
        <path d="M2.040 6.250A11.500 11.500 0 0 1 21.960 6.250H12L7 14.900z" fill="#e33b2e" />
        <path d="M2.040 6.250A11.500 11.500 0 0 0 12 23.500l5-8.600H7z" fill="#229342" />
        <circle cx="12" cy="12" r="5.700" fill="#fff" />
        <circle cx="12" cy="12" r="4.500" fill="#1a73e8" />
      </svg>
    </TaskApp>
    <TaskApp label="Word" open active>
      <Svg w={24} h={24}>
        <path d="M4 1l9 0-2 21-10-1z" fill="#6f93cf" stroke="#dce8f8" />
        <path d="M8 3l15-1-2 20-14-1z" fill="#f4f7fc" stroke="#3e65a8" />
        <text x="9" y="13" fontSize="9" fontWeight="bold" fontFamily="Liberation Serif" fill="#2b4f96">W</text>
        <path d="M18 7h3M18 10h3M18 13h3M10 16h10M13 19h7" stroke="#2b4f96" strokeWidth="1.400" />
      </Svg>
    </TaskApp>
    <div className="ml-auto flex h-full items-center">
      <button className="flex items-center gap-[7px] whitespace-nowrap text-[14px]">
        <Svg w={26} h={22}><circle cx="22" cy="4" r="3.500" fill="#d23a22" /><path d="M6 20a5 5 0 0 1 0-10 7 7 0 0 1 13-1 5.500 5.500 0 0 1 1 11z" fill="#c3d9f5" /><path d="M6 20a5 5 0 0 1-3-9c5-1 9 3 16 3 3 0 4 1 6 1a5 5 0 0 1-5 5z" fill="#8fb3e6" opacity=".5" /></Svg>
        <span>4°C</span>
        <span>Cloudy</span>
      </button>
      <button aria-label="Show hidden icons" className="ml-[25px]"><Svg w={12} h={8}><path d="M.7 7L6 1.500 11.300 7" stroke="#fff" strokeWidth="1.400" /></Svg></button>
      <button aria-label="Battery" className="ml-[10px]"><Svg w={17} h={14}><path d="M5.500 4.500h9v7h-9zM15.500 6.500v3" stroke="#fff" /><path d="M7 6h6v4H7z" fill="#fff" /><path d="M1.500 0v2M4.500 0v2" stroke="#fff" /><path d="M0 2h6v2L4 6H2L0 4z" fill="#fff" /><path d="M3 5v5h3" stroke="#fff" /></Svg></button>
      <button aria-label="Wi-Fi" className="ml-[9px]"><Svg w={14} h={14}><path d="M1 12.500A11.500 11.500 0 0 1 12.500 1M4 13A9 9 0 0 1 13 4.500M7.500 13A6 6 0 0 1 13 8" stroke="#d5d5d5" strokeWidth="1.200" /><circle cx="11.500" cy="12" r="1.500" fill="#fff" /></Svg></button>
      <button aria-label="Volume" className="ml-[8px]"><Svg w={17} h={14}><path d="M1 5h3l4-4v12L4 9H1z" stroke="#fff" /><path d="M10 5c1 1 1 3 0 4M12 3c2.500 2 2.500 6 0 8M14 1c3.500 3 3.500 9 0 12" stroke="#fff" /></Svg></button>
      <button className="ml-[9px] text-[12px]">ENG</button>
      <button className="ml-[8px] w-[60px] text-center text-[11px] leading-[18px]">
        <span className="block">1:55 PM</span>
        <span className="block">4/6/2023</span>
      </button>
      <button aria-label="Notifications" className="ml-[13px]"><Svg w={17} h={16}><path d="M1 1h15v11h-4l-3 3v-3H1z" stroke="#fff" strokeWidth="1.200" /></Svg></button>
      <button aria-label="Show desktop" className="ml-[20px] h-full w-[5px] border-l border-[#6a6a6a]" />
    </div>
  </div>
);

export default function App() {
  return (
    <div className="relative flex h-screen min-w-[1280px] flex-col overflow-hidden font-['Noto_Sans',sans-serif]">
      <TitleBar />
      <TabRow />
      <Ribbon />
      <Workspace />
      <StatusBar />
      <Taskbar />
    </div>
  );
}
